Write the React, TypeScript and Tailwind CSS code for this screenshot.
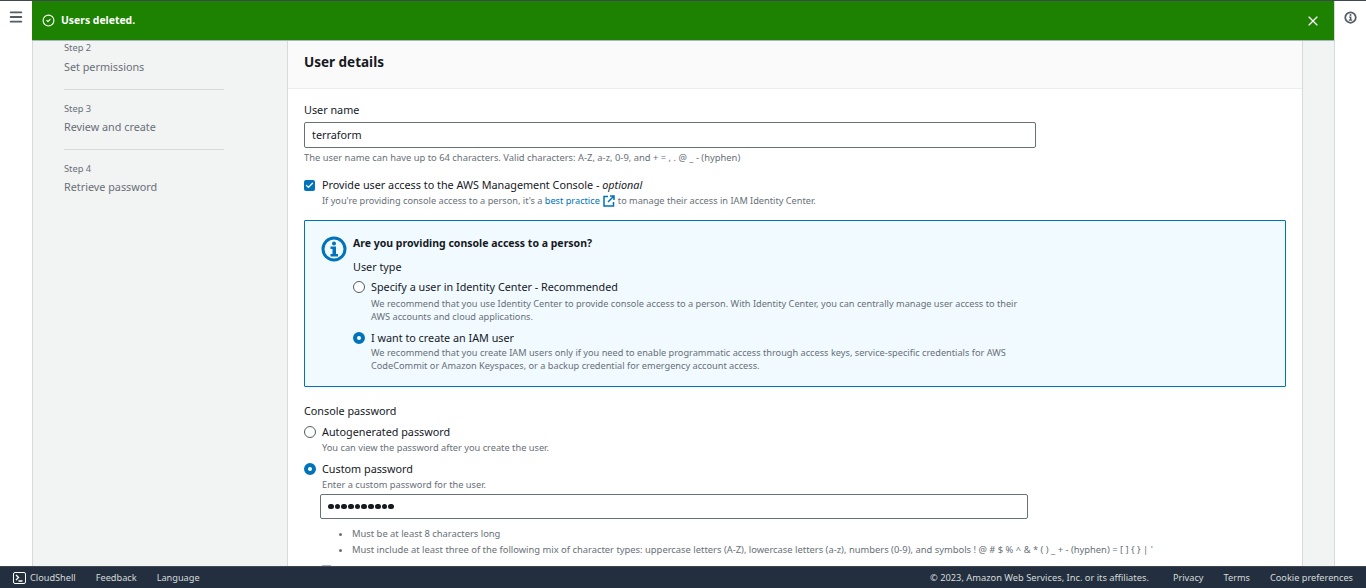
import { Menu, X, CircleCheck, Check } from "lucide-react";

const steps = [
  { step: "Step 2", label: "Set permissions", box: "h-[48px] border-b border-[#d5dbdb] mb-[13px]", gap: "mt-[6px]" },
  { step: "Step 3", label: "Review and create", box: "h-[47px] border-b border-[#d5dbdb] mb-[13px]", gap: "mt-[5px]" },
  { step: "Step 4", label: "Retrieve password", box: "", gap: "mt-[5px]" },
];

function Radio({ on }: { on?: boolean }) {
  return on ? (
    <span className="w-3 h-3 rounded-full border-[4px] border-[#0073bb] bg-white shrink-0" />
  ) : (
    <span className="w-3 h-3 rounded-full border border-[#545b64] bg-white shrink-0" />
  );
}

export default function App() {
  return (
    <div className="h-[588px] w-[1366px] overflow-hidden flex flex-col bg-white text-[#16191f] font-['Noto_Sans',sans-serif]">
      <div className="flex flex-1 min-h-0 border-t border-[#414750]">
        <div className="w-8 shrink-0 flex justify-center pt-[8px]">
          <Menu size={16} strokeWidth={2.75} className="text-[#545b64]" />
        </div>

        <div className="flex-1 min-w-0 flex flex-col bg-[#f2f3f3]">
          <div className="h-[39px] shrink-0 bg-[#1d8102] flex items-center pl-[10px] pr-[13px] text-white">
            <CircleCheck size={13} strokeWidth={2} />
            <span className="ml-[6px] text-[10.4px] font-bold">Users deleted.</span>
            <X size={16} strokeWidth={1.75} className="ml-auto" />
          </div>

          <div className="flex flex-1 min-h-0 border-t border-[#aab7b8]">
            <div className="w-[255px] shrink-0 border-l border-[#d5dbdb] pl-[31px] pt-[1px]">
              {steps.map((s) => (
                <div key={s.step} className={`w-[160px] ${s.box}`}>
                  <div className="text-[9.25px] leading-[12px] text-[#687078]">{s.step}</div>
                  <div className={`${s.gap} text-[10.8px] leading-[14px] text-[#687078]`}>{s.label}</div>
                </div>
              ))}
            </div>

            <div className="w-[1016px] shrink-0 bg-white border-x border-[#d5dbdb] overflow-hidden">
              <div className="h-[48px] bg-[#fafafa] border-b border-[#eaeded] px-4 pb-[5px] flex items-center">
                <h2 className="text-[13.5px] font-bold">User details</h2>
              </div>
              <div className="px-4 pt-[14px]">
                <div className="text-[10.8px] leading-[14px]">User name</div>
                <div className="mt-[5px] w-[732px] h-[26px] border border-[#687078] rounded-[2px] px-[7px] flex items-center text-[10.8px]">
                  terraform
                </div>
                <p className="mt-[4px] text-[9.4px] leading-[12px] text-[#687078]">
                  The user name can have up to 64 characters. Valid characters: A-Z, a-z, 0-9, and + = , . @ _ - (hyphen)
                </p>

                <div className="mt-[14px] flex items-start">
                  <span className="w-[11px] h-[11px] mt-[2px] rounded-[2px] bg-[#0073bb] flex items-center justify-center shrink-0">
                    <Check size={9} strokeWidth={3.5} className="text-white" />
                  </span>
                  <div className="ml-[7px]">
                    <div className="text-[10.8px] leading-[14px]">
                      Provide user access to the AWS Management Console - <i>optional</i>
                    </div>
                    <p className="mt-[3px] text-[9.2px] leading-[12px] text-[#687078] flex items-center">
                      If you're providing console access to a person, it's a&nbsp;
                      <span className="text-[#0073bb]">best practice</span>
                      <svg width="12" height="12" viewBox="0 0 12 12" fill="none" stroke="#0073bb" strokeWidth="1.5" className="mx-[3px]">
                        <path d="M5 1.5H1V11H10.5V7M7 1H11V5M11 1L5 7" />
                      </svg>
                      to manage their access in IAM Identity Center.
                    </p>
                  </div>
                </div>

                <div className="mt-[13px] h-[167px] border border-[#0073bb] bg-[#f1faff] rounded-[1px] pl-[16px] pt-[15px] flex">
                  <svg width="26" height="26" viewBox="0 0 26 26" fill="none" className="shrink-0">
                    <circle cx="13" cy="13" r="11" stroke="#0073bb" strokeWidth="3" />
                    <circle cx="13" cy="7.5" r="2" fill="#0073bb" />
                    <path d="M9.5 10.5h5.5v7.5H17v2.5H9.5V18h2v-5h-2z" fill="#0073bb" />
                  </svg>
                  <div className="ml-[6px]">
                    <div className="text-[10.5px] leading-[14px] font-bold">Are you providing console access to a person?</div>
                    <div className="mt-[10px] text-[10.8px] leading-[14px]">User type</div>
                    <div className="mt-[6px] flex items-center">
                      <Radio />
                      <span className="ml-[6px] text-[10.8px] leading-[14px]">Specify a user in Identity Center - Recommended</span>
                    </div>
                    <p className="ml-[18px] mt-[3px] w-[660px] text-[9.2px] leading-[13px] text-[#687078]">
                      We recommend that you use Identity Center to provide console access to a person. With Identity Center, you can centrally manage user access to their AWS accounts and cloud applications.
                    </p>
                    <div className="mt-[8px] flex items-center">
                      <Radio on />
                      <span className="ml-[6px] text-[10.8px] leading-[14px]">I want to create an IAM user</span>
                    </div>
                    <p className="ml-[18px] mt-[1px] w-[660px] text-[9.2px] leading-[13px] text-[#687078]">
                      We recommend that you create IAM users only if you need to enable programmatic access through access keys, service-specific credentials for AWS CodeCommit or Amazon Keyspaces, or a backup credential for emergency account access.
                    </p>
                  </div>
                </div>

                <div className="mt-[17px] text-[10.8px] leading-[14px]">Console password</div>
                <div className="mt-[7px] flex items-center">
                  <Radio />
                  <span className="ml-[6px] text-[10.8px] leading-[14px]">Autogenerated password</span>
                </div>
                <p className="ml-[18px] mt-[3px] text-[9.25px] leading-[12px] text-[#687078]">You can view the password after you create the user.</p>
                <div className="mt-[8px] flex items-center">
                  <Radio on />
                  <span className="ml-[6px] text-[10.8px] leading-[14px]">Custom password</span>
                </div>
                <p className="ml-[18px] mt-[3px] text-[9.25px] leading-[12px] text-[#687078]">Enter a custom password for the user.</p>
                <div className="ml-[16px] mt-[3px] w-[708px] h-[25px] border border-[#687078] rounded-[2px] px-[7px] flex items-center gap-[1px]">
                  {Array.from({ length: 10 }).map((_, i) => (
                    <span key={i} className="w-[5.7px] h-[5.7px] rounded-full bg-[#16191f]" />
                  ))}
                </div>
                <ul className="ml-[48px] mt-[7px] text-[9.4px] leading-[16px] text-[#687078] list-disc whitespace-nowrap">
                  <li>Must be at least 8 characters long</li>
                  <li>Must include at least three of the following mix of character types: uppercase letters (A-Z), lowercase letters (a-z), numbers (0-9), and symbols ! @ # $ % ^ &amp; * ( ) _ + - (hyphen) = [ ] {"{"} {"}"} | '</li>
                </ul>
                <span className="block ml-[17px] mt-[7px] w-[11px] h-[11px] rounded-[2px] border border-[#aab7b8] bg-[#d5dbdb]" />
              </div>
            </div>
          </div>
        </div>

        <div className="w-8 shrink-0 flex justify-center pt-[10px] border-l border-[#d5dbdb]">
          <svg width="13" height="13" viewBox="0 0 13 13" fill="none">
            <circle cx="6.5" cy="6.5" r="5.25" stroke="#545b64" strokeWidth="1.75" />
            <circle cx="6.5" cy="3.9" r="1" fill="#545b64" />
            <path d="M5 5.5h2.4v3h.8v1.2H4.8V8.5h1V6.6H5z" fill="#545b64" />
          </svg>
        </div>
      </div>

      <footer className="h-[22px] shrink-0 bg-[#232f3e] border-t border-[#414750] flex items-center pl-[13px] pr-[13px] text-[9.2px] text-[#d5dbdb]">
        <svg width="13" height="12" viewBox="0 0 13 12" fill="none" className="mr-[4px]">
          <rect x="0.5" y="0.5" width="12" height="11" rx="1.5" stroke="#fff" />
          <path d="M3 3 5.5 5.5 3 8M5.5 9h4" stroke="#fff" strokeWidth="1.4" />
        </svg>
        <span>CloudShell</span>
        <span className="ml-[20px]">Feedback</span>
        <span className="ml-[20px]">Language</span>
        <span className="ml-auto text-[9.3px]">© 2023, Amazon Web Services, Inc. or its affiliates.</span>
        <span className="ml-[24px]">Privacy</span>
        <span className="ml-[20px]">Terms</span>
        <span className="ml-[20px]">Cookie preferences</span>
      </footer>
    </div>
  );
}
